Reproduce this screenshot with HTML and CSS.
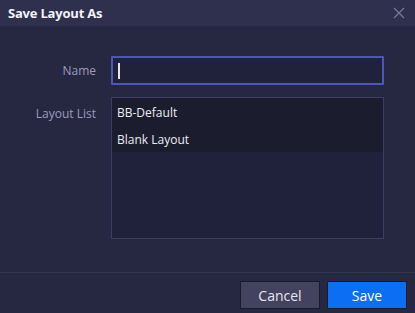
FILE: index.html
```html
<!DOCTYPE html>
<html lang="en">
<head>
  <meta charset="UTF-8">
  <meta name="viewport" content="width=device-width, initial-scale=1.0">
  <title>Save Layout As</title>
  <link rel="stylesheet" href="styles.css">
</head>
<body>
  <div class="dialog">
    <div class="title-bar">
      <div class="title">Save Layout As</div>
      <svg class="close" width="12" height="12" viewBox="0 0 12 12">
        <path d="M1 1 L11 11 M11 1 L1 11" stroke="#77779f" stroke-width="1.3" fill="none"/>
      </svg>
    </div>

    <div class="content">
      <div class="form-row">
        <label class="label">Name</label>
        <div class="text-input"><span class="caret"></span></div>
      </div>

      <div class="form-row top">
        <label class="label list-label">Layout List</label>
        <div class="list-box">
          <div class="list-item">BB-Default</div>
          <div class="list-item">Blank Layout</div>
        </div>
      </div>
    </div>

    <div class="footer">
      <button class="btn cancel">Cancel</button>
      <button class="btn save">Save</button>
    </div>
  </div>
</body>
</html>
```

FILE: styles.css
```css
body {
  margin: 0;
  padding: 0;
  font-family: "Open Sans", "Noto Sans", Arial, sans-serif;
  background-color: #262740;
}

.dialog {
  width: 415px;
  height: 313px;
  display: flex;
  flex-direction: column;
  background-color: #262740;
}

.title-bar {
  height: 26px;
  display: flex;
  justify-content: space-between;
  align-items: center;
  padding: 0 10px 0 8px;
  background-color: #2f2f4e;
}

.title {
  font-size: 13px;
  font-weight: bold;
  color: #f2f2f7;
  letter-spacing: -0.2px;
}

.close {
  margin-top: -1px;
}

.content {
  flex: 1;
  padding: 30px 31px 0 0;
  display: flex;
  flex-direction: column;
  gap: 12px;
}

.form-row {
  display: flex;
  align-items: center;
}

.form-row.top {
  align-items: flex-start;
}

.label {
  width: 96px;
  text-align: right;
  padding-right: 15px;
  font-size: 12px;
  color: #9c9cbf;
}

.list-label {
  padding-top: 8px;
}

.text-input {
  flex: 1;
  height: 25px;
  border: 2px solid #4d57b8;
  border-radius: 1px;
  background-color: #20213a;
  display: flex;
  align-items: center;
  padding-left: 5px;
}

.caret {
  width: 2px;
  height: 16px;
  background-color: #e4e4ee;
}

.list-box {
  flex: 1;
  height: 140px;
  border: 1px solid #3c3d65;
  background-color: #20213a;
}

.list-item {
  height: 27px;
  line-height: 29px;
  padding-left: 5px;
  font-size: 12px;
  font-weight: 500;
  color: #ececf3;
  background-color: #1b1c2e;
}

.footer {
  height: 41px;
  box-sizing: border-box;
  border-top: 1px solid #33344f;
  display: flex;
  justify-content: flex-end;
  align-items: flex-start;
  gap: 7px;
  padding: 8px 8px 0 0;
}

.btn {
  height: 28px;
  width: 80px;
  border: 1px solid #1a1a2b;
  border-radius: 1px;
  font-family: "Open Sans", "Noto Sans", Arial, sans-serif;
  font-size: 14px;
  color: #ffffff;
  cursor: pointer;
}

.cancel {
  background-color: #43425f;
  color: #e6e6ee;
}

.save {
  background-color: #0c6ef2;
}
```
